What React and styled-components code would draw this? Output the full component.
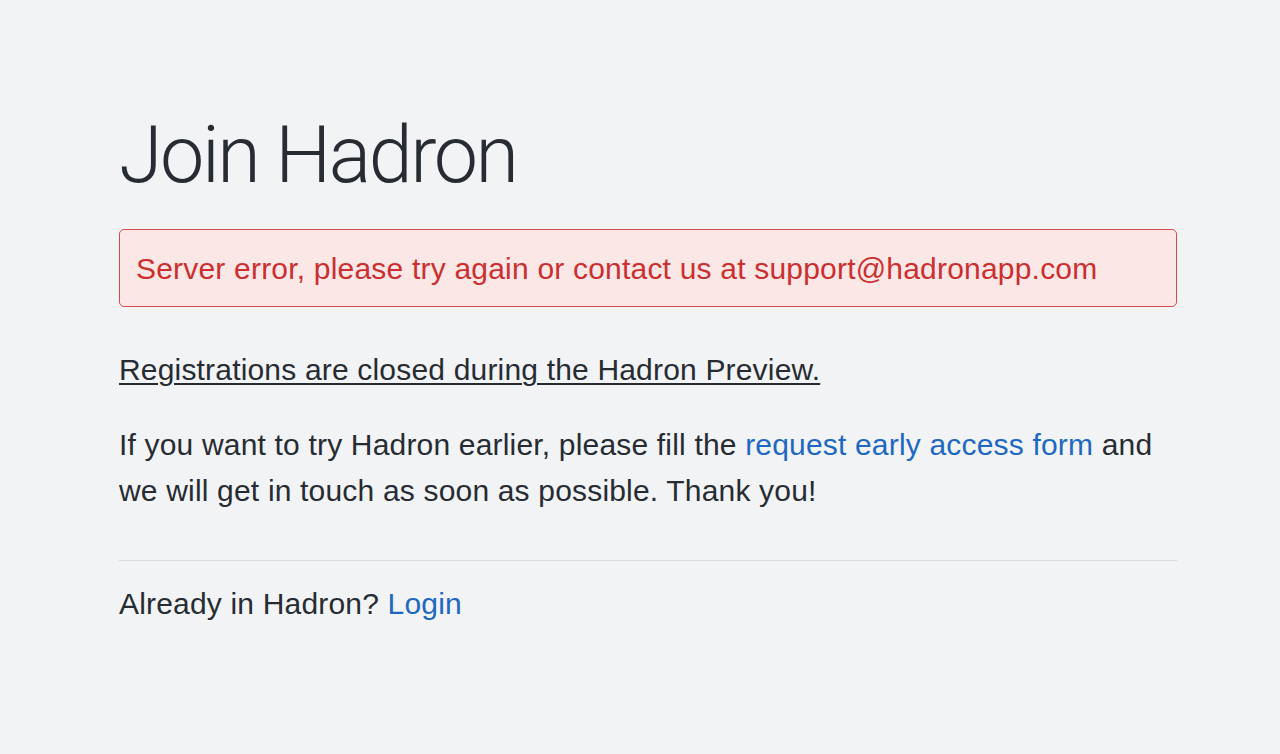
import React from 'react';
import styled, { createGlobalStyle } from 'styled-components';

const GlobalStyle = createGlobalStyle`
    html, body {
        margin: 0;
        padding: 0;
        background: #f2f3f5;
    }
    body {
        font-family: "Liberation Sans", Arial, sans-serif;
        color: #262c32;
    }
`;

const Page = styled.div`
    min-height: 754px;
    background: #f2f3f5;
    padding: 115px 103px 0 119px;
    box-sizing: border-box;
`;

const Title = styled.h1`
    margin: 0;
    font-family: "Roboto", "Liberation Sans", sans-serif;
    font-weight: 300;
    font-size: 79px;
    line-height: 80px;
    letter-spacing: -2.4px;
    color: #262c32;
`;

const Alert = styled.div`
    margin-top: 34px;
    padding: 16px 16px 14px;
    border: 1px solid #dc4a48;
    border-radius: 5px;
    background: #fce7e7;
    color: #cc2f2f;
    font-size: 30px;
    line-height: 46px;
    letter-spacing: 0.2px;
`;

const Text = styled.p`
    margin: ${props => props.gap || 0}px 0 0;
    font-size: 30px;
    line-height: 46px;
    letter-spacing: 0.18px;
    text-decoration: ${props => (props.underline ? 'underline' : 'none')};
    text-underline-offset: 3px;
    text-decoration-thickness: 2px;
`;

const Link = styled.a`
    color: #1f68c2;
    text-decoration: none;
    cursor: pointer;
`;

const Divider = styled.hr`
    margin: 46px 0 20px;
    border: 0;
    border-top: 1px solid #d8dadd;
`;

export default function App() {
    return (
        <Page>
            <GlobalStyle />
            <Title>Join Hadron</Title>
            <Alert>Server error, please try again or contact us at support@hadronapp.com</Alert>
            <Text gap={40} underline>
                Registrations are closed during the Hadron Preview.
            </Text>
            <Text gap={29}>
                If you want to try Hadron earlier, please fill the <Link>request early access form</Link> and
                we will get in touch as soon as possible. Thank you!
            </Text>
            <Divider />
            <Text>
                Already in Hadron? <Link>Login</Link>
            </Text>
        </Page>
    );
}
